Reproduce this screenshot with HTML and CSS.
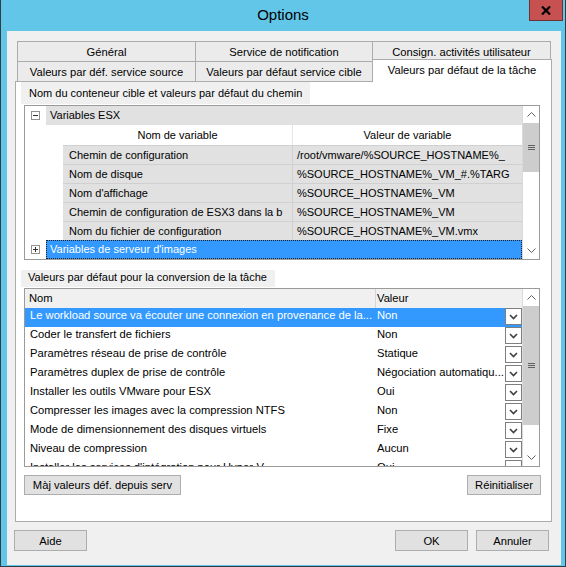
FILE: index.html
```html
<!DOCTYPE html>
<html lang="fr">
<head>
<meta charset="utf-8">
<title>Options</title>
<link rel="stylesheet" href="styles.css">
</head>
<body>
<div class="window">
  <div class="titlebar">
    <span></span>
    <span class="title">Options</span>
    <span class="tb-right">
      <span class="close">
        <svg width="10" height="9" viewBox="0 0 10 9"><path d="M1 0.5 L9 8.5 M9 0.5 L1 8.5" stroke="#000" stroke-width="2.2" fill="none"/></svg>
      </span>
    </span>
  </div>
  <div class="client">
    <div class="tabctl">
      <div class="tabrow">
        <div class="tab w1">Général</div>
        <div class="tab w2">Service de notification</div>
        <div class="tab w1">Consign. activités utilisateur</div>
      </div>
      <div class="tabrow">
        <div class="tab w1">Valeurs par déf. service source</div>
        <div class="tab w2">Valeurs par défaut service cible</div>
        <div class="tab active">Valeurs par défaut de la tâche</div>
      </div>
      <div class="page">
        <div class="section-label l1">Nom du conteneur cible et valeurs par défaut du chemin</div>
        <div class="tree">
          <div class="tmain">
            <div class="grow">
              <div class="expander"><svg width="9" height="9" viewBox="0 0 9 9"><rect x="0.5" y="0.5" width="8" height="8" fill="#fff" stroke="#919191"/><path d="M2 4.5 H7" stroke="#333"/></svg></div>
              <div class="glabel">Variables ESX</div>
            </div>
            <div class="sub">
              <div class="shead"><div>Nom de variable</div><div>Valeur de variable</div></div>
              <div class="srow"><div>Chemin de configuration</div><div>/root/vmware/%SOURCE_HOSTNAME%_</div></div>
              <div class="srow"><div>Nom de disque</div><div>%SOURCE_HOSTNAME%_VM_#.%TARG</div></div>
              <div class="srow"><div>Nom d'affichage</div><div>%SOURCE_HOSTNAME%_VM</div></div>
              <div class="srow"><div>Chemin de configuration de ESX3 dans la b</div><div>%SOURCE_HOSTNAME%_VM</div></div>
              <div class="srow"><div>Nom du fichier de configuration</div><div>%SOURCE_HOSTNAME%_VM.vmx</div></div>
            </div>
            <div class="grow sel">
              <div class="expander"><svg width="9" height="9" viewBox="0 0 9 9"><rect x="0.5" y="0.5" width="8" height="8" fill="#fff" stroke="#919191"/><path d="M2 4.5 H7 M4.5 2 V7" stroke="#333"/></svg></div>
              <div class="glabel">Variables de serveur d'images</div>
            </div>
          </div>
          <div class="vscroll">
            <div class="sb-btn"><svg width="9" height="5" viewBox="0 0 9 5"><polyline points="0.5,4.5 4.5,0.5 8.5,4.5" fill="none" stroke="#606060"/></svg></div>
            <div class="sb-thumb t1"><svg width="7" height="5" viewBox="0 0 7 5"><path d="M0 0.5 H7 M0 2.5 H7 M0 4.5 H7" stroke="#606060"/></svg></div>
            <div class="sb-track"></div>
            <div class="sb-btn"><svg width="9" height="5" viewBox="0 0 9 5"><polyline points="0.5,0.5 4.5,4.5 8.5,0.5" fill="none" stroke="#606060"/></svg></div>
          </div>
        </div>

        <div class="section-label l2">Valeurs par défaut pour la conversion de la tâche</div>
        <div class="grid2">
          <div class="g2main">
            <div class="g2head"><div>Nom</div><div class="vh">Valeur</div></div>
            <div class="g2row sel"><div class="nm">Le workload source va écouter une connexion en provenance de la...</div><div class="vl">Non</div><div class="dd"><svg width="9" height="6" viewBox="0 0 9 6"><polyline points="1,1 4.5,4.5 8,1" fill="none" stroke="#404040" stroke-width="1.6"/></svg></div></div>
            <div class="g2row"><div class="nm">Coder le transfert de fichiers</div><div class="vl">Non</div><div class="dd"><svg width="9" height="6" viewBox="0 0 9 6"><polyline points="1,1 4.5,4.5 8,1" fill="none" stroke="#404040" stroke-width="1.6"/></svg></div></div>
            <div class="g2row"><div class="nm">Paramètres réseau de prise de contrôle</div><div class="vl">Statique</div><div class="dd"><svg width="9" height="6" viewBox="0 0 9 6"><polyline points="1,1 4.5,4.5 8,1" fill="none" stroke="#404040" stroke-width="1.6"/></svg></div></div>
            <div class="g2row"><div class="nm">Paramètres duplex de prise de contrôle</div><div class="vl">Négociation automatiqu...</div><div class="dd"><svg width="9" height="6" viewBox="0 0 9 6"><polyline points="1,1 4.5,4.5 8,1" fill="none" stroke="#404040" stroke-width="1.6"/></svg></div></div>
            <div class="g2row"><div class="nm">Installer les outils VMware pour ESX</div><div class="vl">Oui</div><div class="dd"><svg width="9" height="6" viewBox="0 0 9 6"><polyline points="1,1 4.5,4.5 8,1" fill="none" stroke="#404040" stroke-width="1.6"/></svg></div></div>
            <div class="g2row"><div class="nm">Compresser les images avec la compression NTFS</div><div class="vl">Non</div><div class="dd"><svg width="9" height="6" viewBox="0 0 9 6"><polyline points="1,1 4.5,4.5 8,1" fill="none" stroke="#404040" stroke-width="1.6"/></svg></div></div>
            <div class="g2row"><div class="nm">Mode de dimensionnement des disques virtuels</div><div class="vl">Fixe</div><div class="dd"><svg width="9" height="6" viewBox="0 0 9 6"><polyline points="1,1 4.5,4.5 8,1" fill="none" stroke="#404040" stroke-width="1.6"/></svg></div></div>
            <div class="g2row"><div class="nm">Niveau de compression</div><div class="vl">Aucun</div><div class="dd"><svg width="9" height="6" viewBox="0 0 9 6"><polyline points="1,1 4.5,4.5 8,1" fill="none" stroke="#404040" stroke-width="1.6"/></svg></div></div>
            <div class="g2row"><div class="nm">Installer les services d'intégration pour Hyper-V</div><div class="vl">Oui</div><div class="dd"><svg width="9" height="6" viewBox="0 0 9 6"><polyline points="1,1 4.5,4.5 8,1" fill="none" stroke="#404040" stroke-width="1.6"/></svg></div></div>
          </div>
          <div class="vscroll">
            <div class="sb-btn"><svg width="9" height="5" viewBox="0 0 9 5"><polyline points="0.5,4.5 4.5,0.5 8.5,4.5" fill="none" stroke="#606060"/></svg></div>
            <div class="sb-thumb t2"><svg width="7" height="5" viewBox="0 0 7 5"><path d="M0 0.5 H7 M0 2.5 H7 M0 4.5 H7" stroke="#606060"/></svg></div>
            <div class="sb-track"></div>
            <div class="sb-btn"><svg width="9" height="5" viewBox="0 0 9 5"><polyline points="0.5,0.5 4.5,4.5 8.5,0.5" fill="none" stroke="#606060"/></svg></div>
          </div>
        </div>

        <div class="page-buttons">
          <div class="btn b-maj">Màj valeurs déf. depuis serv</div>
          <div class="btn b-reinit">Réinitialiser</div>
        </div>
      </div>
    </div>
    <div class="dlg-buttons">
      <div class="btn b-dlg">Aide</div>
      <div class="fill"></div>
      <div class="btn b-dlg">OK</div>
      <div class="btn b-dlg">Annuler</div>
    </div>
  </div>
</div>
</body>
</html>
```
FILE: styles.css
```css
* { box-sizing: border-box; }
html, body { margin: 0; padding: 0; }
body {
  width: 566px;
  height: 567px;
  overflow: hidden;
  background: #62c6e9;
  font-family: "Liberation Sans", Arial, sans-serif;
  font-size: 11.2px;
  color: #000;
}
.window {
  height: 567px;
  display: flex;
  flex-direction: column;
  border-left: 1px solid #2d3e46;
  border-right: 1px solid #2d3e46;
  border-bottom: 1px solid #2d3e46;
}
.titlebar {
  height: 31px;
  flex: none;
  display: grid;
  grid-template-columns: 1fr auto 1fr;
}
.title { font-size: 15px; line-height: 30px; }
.tb-right { display: flex; justify-content: flex-end; align-items: flex-start; }
.close {
  width: 34px;
  height: 21px;
  margin-right: 2px;
  background: #c75050;
  border: 1px solid #6b3434;
  border-top: 0;
  display: flex;
  align-items: center;
  justify-content: center;
}
.client {
  flex: 1;
  margin: 0 4px 1px 6px;
  background: #f0f0f0;
  padding: 10px 0 0 7px;
  display: flex;
  flex-direction: column;
}
.tabctl { width: 537px; margin-left: 1px; }
.tabrow { display: flex; height: 21px; margin-left: 2px; align-items: flex-start; }
.tabrow + .tabrow { margin-top: -1px; }
.tab {
  height: 21px;
  border: 1px solid #acacac;
  background: #ebebeb;
  display: flex;
  align-items: center;
  justify-content: center;
  white-space: nowrap;
}
.tab + .tab { margin-left: -1px; }
.w1 { width: 179px; }
.w2 { width: 178px; }
.tab.active {
  width: 180px;
  height: 23px;
  margin-top: -2px;
  padding-bottom: 2px;
  background: #fff;
  border-bottom: 0;
  position: relative;
  z-index: 2;
}
.page {
  margin-top: -1px;
  height: 441px;
  border: 1px solid #acacac;
  background: #fff;
  display: flex;
  flex-direction: column;
  align-items: flex-start;
}
.section-label {
  margin-left: 5px;
  background: #f0f0f0;
  padding: 0 8px;
  white-space: nowrap;
  font-size: 11px;
}
.l1 { height: 22px; line-height: 22px; }
.l2 { margin-top: 10px; height: 17px; line-height: 15px; padding-left: 7px; }

.tree {
  margin: 1px 0 0 8px;
  width: 516px;
  height: 155px;
  border: 1px solid #9a9a9a;
  display: grid;
  grid-template-columns: 1fr 17px;
  font-size: 11px;
}
.tmain { overflow: hidden; }
.grow { display: flex; height: 19px; }
.expander { width: 21px; display: flex; align-items: center; justify-content: center; }
.glabel { flex: 1; background: #e1e1e1; padding-left: 4px; line-height: 19px; white-space: nowrap; }
.grow.sel .glabel { background: #3399ff; color: #fff; border: 1px dotted #202020; line-height: 17px; padding-left: 3px; }
.sub { margin-left: 38px; }
.shead { display: grid; grid-template-columns: 229px 1fr; height: 20px; background: #fff; }
.shead > div { text-align: center; line-height: 20px; }
.shead > div + div { border-left: 1px solid #e6e6e6; }
.srow {
  display: grid;
  grid-template-columns: 229px 1fr;
  height: 19px;
  background: #e1e1e1;
  border-top: 1px solid #d0d0d0;
}
.srow > div { padding-left: 6px; line-height: 18px; white-space: nowrap; overflow: hidden; }
.srow > div + div { border-left: 1px solid #d0d0d0; padding-left: 4px; }

.vscroll { display: flex; flex-direction: column; background: #fff; border-left: 1px solid #dadada; }
.sb-btn { height: 17px; flex: none; display: flex; align-items: center; justify-content: center; }
.sb-thumb { flex: none; background: #cdcdcd; display: flex; align-items: center; justify-content: center; }
.t1 { height: 49px; }
.t2 { height: 119px; }
.sb-track { flex: 1; }

.grid2 {
  margin: 1px 0 0 8px;
  width: 516px;
  height: 179px;
  border: 1px solid #9a9a9a;
  display: grid;
  grid-template-columns: 1fr 17px;
}
.g2main { overflow: hidden; }
.g2head { display: grid; grid-template-columns: 350px 1fr; height: 19px; background: #f0f0f0; }
.g2head > div { line-height: 19px; padding-left: 4px; }
.g2head > .vh { border-left: 1px solid #d5d5d5; padding-left: 1px; }
.g2row { display: grid; grid-template-columns: 350px 1fr 17px; height: 19px; align-items: start; }
.g2row .nm { padding-left: 5px; line-height: 14px; white-space: nowrap; overflow: hidden; }
.g2row .vl { padding-left: 2px; line-height: 14px; white-space: nowrap; overflow: hidden; }
.g2row.sel { background: #3399ff; color: #fff; }
.dd {
  width: 17px;
  height: 17px;
  border: 1px solid #7f7f7f;
  background: #fff;
  display: flex;
  align-items: center;
  justify-content: center;
}

.btn {
  border: 1px solid #adadad;
  background: #e1e1e1;
  display: flex;
  align-items: center;
  justify-content: center;
  white-space: nowrap;
}
.page-buttons {
  margin: 8px 0 0 8px;
  width: 517px;
  display: flex;
  justify-content: space-between;
}
.b-maj { width: 157px; height: 20px; }
.b-reinit { width: 74px; height: 20px; }
.dlg-buttons { margin-top: 8px; width: 535px; display: flex; gap: 8px; }
.fill { flex: 1; }
.b-dlg { width: 73px; height: 21px; }
```
